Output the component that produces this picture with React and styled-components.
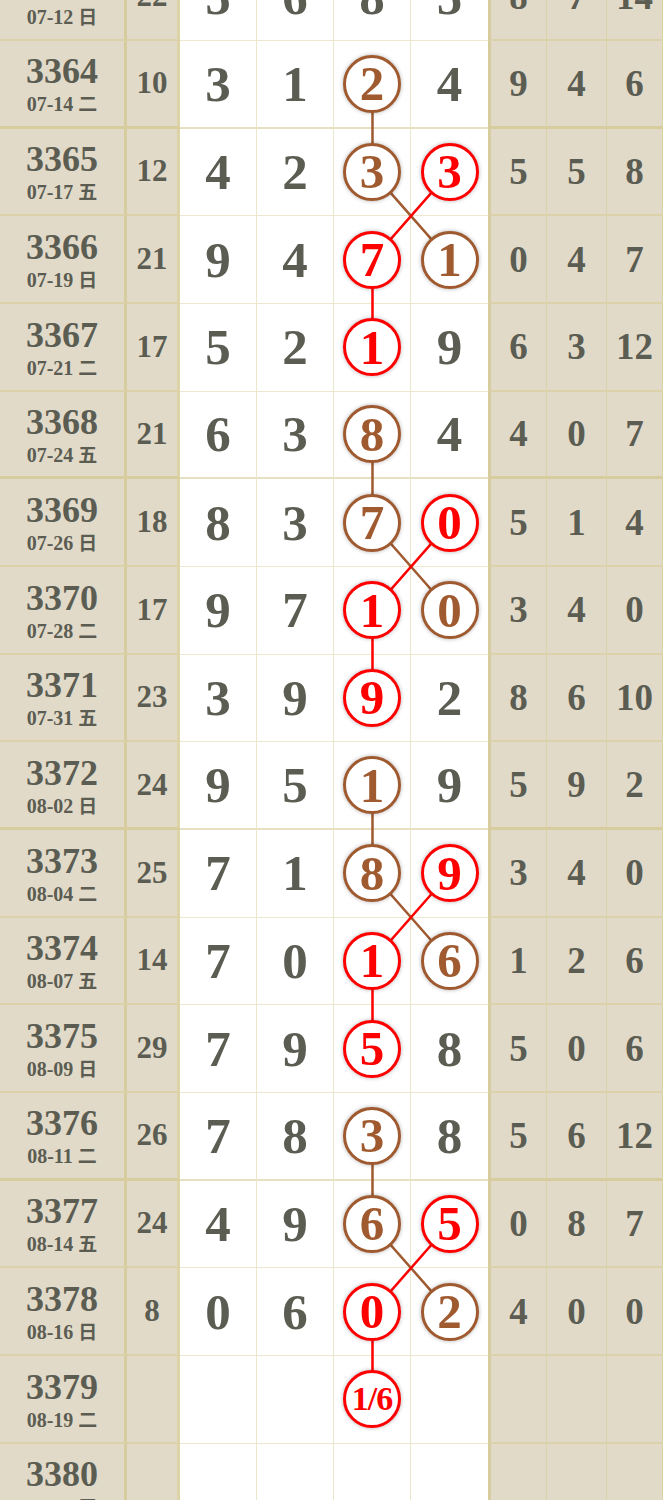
import React from 'react';
import styled, { createGlobalStyle } from 'styled-components';

const ROW_H = 87.67;
const TAN = '#e2dac9';
const GOLD = '#d6cc9e';
const INK = '#5b5d52';
const BROWN = '#a05a30';
const RED = '#ff0000';
const SERIF = '"Liberation Serif", "DejaVu Serif", serif';

const GlobalStyle = createGlobalStyle`
    body {
        margin: 0;
        background: #fff;
        font-family: ${SERIF};
    }
`;

const Viewport = styled.div`
    width: 663px;
    height: 1500px;
    overflow: hidden;
`;

const Table = styled.div`
    position: relative;
    margin-top: -46.67px;
`;

const Row = styled.div`
    display: grid;
    grid-template-columns: 127px 53px repeat(4, 77px) 59px 60px 56px;
    height: ${ROW_H}px;
`;

const TanCell = styled.div`
    box-sizing: border-box;
    background: ${TAN};
    display: flex;
    align-items: center;
    justify-content: center;
    color: ${INK};
    font-weight: 700;
    border-bottom: ${({ thick }) => (thick ? '3px' : '2px')} solid ${({ thick }) => (thick ? GOLD : '#dbd2ab')};
`;

const IssueCell = styled(TanCell)`
    flex-direction: column;
    border-right: 3px solid ${GOLD};
    padding-top: 2px;
`;

const Issue = styled.div`
    font-size: 36px;
    line-height: 34px;
`;

const Date = styled.div`
    font-size: 20px;
    line-height: 20px;
    margin-top: 5px;

    span {
        font-family: "Noto Sans CJK SC", sans-serif;
        font-size: 19px;
        margin-left: 5px;
    }
`;

const SumCell = styled(TanCell)`
    font-size: 31px;
    border-right: 3px solid #dcd3a6;
`;

const TailCell = styled(TanCell)`
    font-size: 37px;
    border-right: 1.5px solid #dbd2a8;
    border-left: ${({ first }) => (first ? `3px solid ${GOLD}` : 'none')};
`;

const NumCell = styled.div`
    box-sizing: border-box;
    background: #fff;
    display: flex;
    align-items: center;
    justify-content: center;
    color: ${INK};
    font-size: 51px;
    font-weight: 700;
    border-right: ${({ last }) => (last ? 'none' : '1px solid #ece6ca')};
    border-bottom: ${({ thick }) => (thick ? '2px solid #e8e1c1' : '1px solid #eee8d0')};
`;

const Circle = styled.div`
    position: relative;
    z-index: 2;
    box-sizing: border-box;
    width: 58px;
    height: 58px;
    border-radius: 50%;
    background: #fff;
    border: 3px solid ${({ tone }) => tone};
    color: ${({ tone }) => tone};
    box-shadow: 0 0 4px rgba(0, 0, 0, 0.3);
    display: flex;
    align-items: center;
    justify-content: center;
    font-size: ${({ small }) => (small ? '34px' : '49px')};
    letter-spacing: ${({ small }) => (small ? '-1px' : '0')};
`;

const Links = styled.svg`
    position: absolute;
    left: 0;
    top: 0;
    z-index: 1;
    pointer-events: none;
`;

const B = 'b';
const R = 'r';

const rows = [
    { issue: 3363, date: '07-12', wd: '日', sum: 22, nums: [5, 6, 8, 5], tail: [8, 7, 14] },
    { issue: 3364, date: '07-14', wd: '二', sum: 10, nums: [3, 1, 2, 4], marks: { 2: B }, tail: [9, 4, 6] },
    { issue: 3365, date: '07-17', wd: '五', sum: 12, nums: [4, 2, 3, 3], marks: { 2: B, 3: R }, tail: [5, 5, 8] },
    { issue: 3366, date: '07-19', wd: '日', sum: 21, nums: [9, 4, 7, 1], marks: { 2: R, 3: B }, tail: [0, 4, 7] },
    { issue: 3367, date: '07-21', wd: '二', sum: 17, nums: [5, 2, 1, 9], marks: { 2: R }, tail: [6, 3, 12] },
    { issue: 3368, date: '07-24', wd: '五', sum: 21, nums: [6, 3, 8, 4], marks: { 2: B }, tail: [4, 0, 7] },
    { issue: 3369, date: '07-26', wd: '日', sum: 18, nums: [8, 3, 7, 0], marks: { 2: B, 3: R }, tail: [5, 1, 4] },
    { issue: 3370, date: '07-28', wd: '二', sum: 17, nums: [9, 7, 1, 0], marks: { 2: R, 3: B }, tail: [3, 4, 0] },
    { issue: 3371, date: '07-31', wd: '五', sum: 23, nums: [3, 9, 9, 2], marks: { 2: R }, tail: [8, 6, 10] },
    { issue: 3372, date: '08-02', wd: '日', sum: 24, nums: [9, 5, 1, 9], marks: { 2: B }, tail: [5, 9, 2] },
    { issue: 3373, date: '08-04', wd: '二', sum: 25, nums: [7, 1, 8, 9], marks: { 2: B, 3: R }, tail: [3, 4, 0] },
    { issue: 3374, date: '08-07', wd: '五', sum: 14, nums: [7, 0, 1, 6], marks: { 2: R, 3: B }, tail: [1, 2, 6] },
    { issue: 3375, date: '08-09', wd: '日', sum: 29, nums: [7, 9, 5, 8], marks: { 2: R }, tail: [5, 0, 6] },
    { issue: 3376, date: '08-11', wd: '二', sum: 26, nums: [7, 8, 3, 8], marks: { 2: B }, tail: [5, 6, 12] },
    { issue: 3377, date: '08-14', wd: '五', sum: 24, nums: [4, 9, 6, 5], marks: { 2: B, 3: R }, tail: [0, 8, 7] },
    { issue: 3378, date: '08-16', wd: '日', sum: 8, nums: [0, 6, 0, 2], marks: { 2: R, 3: B }, tail: [4, 0, 0] },
    { issue: 3379, date: '08-19', wd: '二', sum: '', nums: ['', '', '1/6', ''], marks: { 2: R }, tail: ['', '', ''] },
    { issue: 3380, date: '08-22', wd: '五', sum: '', nums: ['', '', '', ''], tail: ['', '', ''] },
];

// chains of circled numbers: [rowIndex, whiteColumn]
const chains = [];
for (let start = 1; start < 16; start += 4) {
    chains.push({ tone: BROWN, pts: [[start, 2], [start + 1, 2], [start + 2, 3]] });
    chains.push({ tone: RED, pts: [[start + 1, 3], [start + 2, 2], [start + 3, 2]] });
}

const cx = (col) => 180 + 77 * col + 38.5;
const cy = (row) => row * ROW_H + ROW_H / 2;

export default function App() {
    return (
        <Viewport>
            <GlobalStyle />
            <Table>
                {rows.map((r) => {
                    const thick = (r.issue - 3364) % 4 === 0;
                    return (
                        <Row key={r.issue}>
                            <IssueCell thick={thick}>
                                <Issue>{r.issue}</Issue>
                                <Date>
                                    {r.date}
                                    <span>{r.wd}</span>
                                </Date>
                            </IssueCell>
                            <SumCell thick={thick}>{r.sum}</SumCell>
                            {r.nums.map((n, i) => {
                                const mark = r.marks && r.marks[i];
                                return (
                                    <NumCell key={i} thick={thick} last={i === 3}>
                                        {mark ? (
                                            <Circle tone={mark === B ? BROWN : RED} small={String(n).length > 1}>
                                                {n}
                                            </Circle>
                                        ) : (
                                            n
                                        )}
                                    </NumCell>
                                );
                            })}
                            {r.tail.map((t, i) => (
                                <TailCell key={i} thick={thick} first={i === 0}>
                                    {t}
                                </TailCell>
                            ))}
                        </Row>
                    );
                })}
                <Links width="663" height={rows.length * ROW_H}>
                    {chains.map((c, k) => (
                        <polyline
                            key={k}
                            points={c.pts.map(([row, col]) => `${cx(col)},${cy(row)}`).join(' ')}
                            fill="none"
                            stroke={c.tone}
                            strokeWidth="2.5"
                        />
                    ))}
                </Links>
            </Table>
        </Viewport>
    );
}
